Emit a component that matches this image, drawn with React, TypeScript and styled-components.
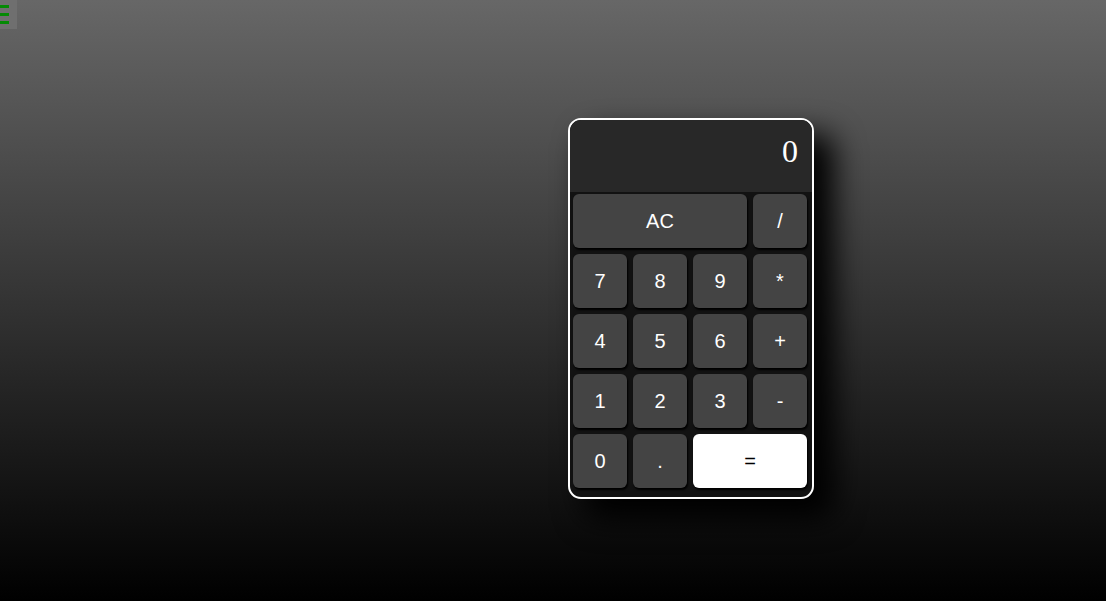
import React from 'react';
import styled, { createGlobalStyle } from 'styled-components';

const GlobalStyle = createGlobalStyle`
  html, body {
    margin: 0;
    padding: 0;
    height: 100%;
  }
  body {
    font-family: "Liberation Sans", Arial, sans-serif;
    background: linear-gradient(#676767, #000000);
    background-attachment: fixed;
    min-height: 100vh;
  }
  #root {
    min-height: 100vh;
  }
`;

type Key = { label: string; id: string; span?: number; accent?: boolean };

const keys: Array<Key> = [
  { label: 'AC', id: 'clear', span: 3 },
  { label: '/', id: 'divide' },
  { label: '7', id: 'seven' },
  { label: '8', id: 'eight' },
  { label: '9', id: 'nine' },
  { label: '*', id: 'multiply' },
  { label: '4', id: 'four' },
  { label: '5', id: 'five' },
  { label: '6', id: 'six' },
  { label: '+', id: 'add' },
  { label: '1', id: 'one' },
  { label: '2', id: 'two' },
  { label: '3', id: 'three' },
  { label: '-', id: 'subtract' },
  { label: '0', id: 'zero' },
  { label: '.', id: 'decimal' },
  { label: '=', id: 'equals', span: 2, accent: true },
];

export default function App() {
  return (
    <React.Fragment>
      <GlobalStyle />
      <MenuToggle aria-label="menu">
        <Bar />
        <Bar />
        <Bar />
      </MenuToggle>
      <Page>
        <Calculator>
          <Display id="display">0</Display>
          <Keypad>
            {keys.map((k) => (
              <CalcKey key={k.id} id={k.id} $span={k.span} $accent={k.accent}>
                {k.label}
              </CalcKey>
            ))}
          </Keypad>
        </Calculator>
      </Page>
    </React.Fragment>
  );
}

const MenuToggle = styled.div`
  position: fixed;
  top: 0;
  left: 0;
  width: 17px;
  height: 29px;
  background: #6f6f6f;
  display: flex;
  flex-direction: column;
  justify-content: center;
  gap: 5px;
  z-index: 2;
`;

const Bar = styled.span`
  display: block;
  width: 9px;
  height: 3px;
  background: #048a04;
`;

const Page = styled.main`
  min-height: 100vh;
  display: flex;
  align-items: flex-start;
  padding: 118px 0 0 568px;
  box-sizing: border-box;
`;

const Calculator = styled.div`
  width: 242px;
  border: 2px solid #ffffff;
  border-radius: 13px;
  background: #121212;
  overflow: hidden;
  box-shadow: 18px 18px 30px 2px #000000;
`;

const Display = styled.div`
  height: 72px;
  background: #282828;
  color: #ffffff;
  font-family: "Liberation Serif", "Times New Roman", serif;
  font-size: 32px;
  text-align: right;
  padding: 13px 14px 0 0;
  box-sizing: border-box;
`;

const Keypad = styled.div`
  display: grid;
  grid-template-columns: repeat(4, 54px);
  grid-auto-rows: 54px;
  gap: 6px;
  padding: 2px 5px 9px 3px;
`;

const CalcKey = styled.button<{ $span?: number; $accent?: boolean }>`
  grid-column: ${(p) => (p.$span ? `span ${p.$span}` : 'auto')};
  border: none;
  border-radius: 6px;
  background: ${(p) => (p.$accent ? '#ffffff' : '#444444')};
  color: ${(p) => (p.$accent ? '#000000' : '#ffffff')};
  font-family: "Liberation Sans", Arial, sans-serif;
  font-size: 20px;
  box-shadow: 1px 2px 2px #000000;
  padding: 0;
  cursor: pointer;
`;
